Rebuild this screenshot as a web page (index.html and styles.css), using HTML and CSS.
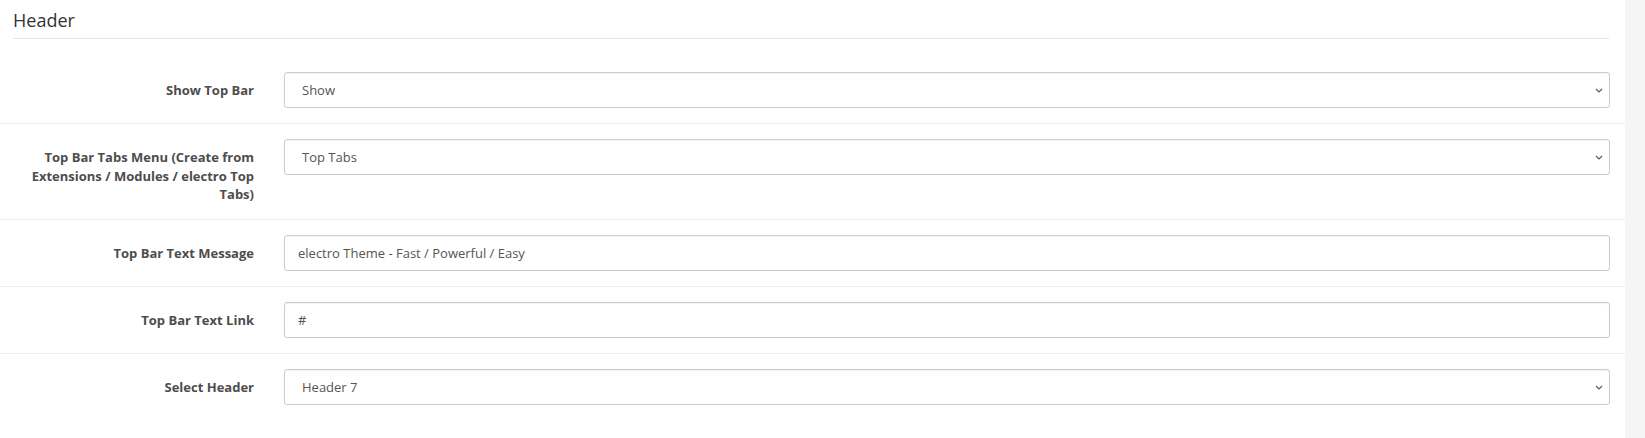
FILE: index.html
```html
<!DOCTYPE html>
<html lang="en">
<head>
  <meta charset="UTF-8">
  <title>Header settings</title>
  <link rel="stylesheet" href="styles.css">
</head>
<body>

<div class="page">
  <div class="panel">
    <fieldset class="settings">
      <legend class="legend">Header</legend>

      <div class="form-group">
        <label class="control-label" for="topbar">Show Top Bar</label>
        <div class="field">
          <select id="topbar" class="form-control">
            <option>Show</option>
            <option>Hide</option>
          </select>
          <svg class="caret" width="8" height="5" viewBox="0 0 8 5"><path d="M1 1 L4 4 L7 1" fill="none" stroke="#555" stroke-width="1.1"/></svg>
        </div>
      </div>

      <div class="form-group">
        <label class="control-label" for="toptabs">Top Bar Tabs Menu (Create from Extensions / Modules / electro Top Tabs)</label>
        <div class="field">
          <select id="toptabs" class="form-control">
            <option>Top Tabs</option>
          </select>
          <svg class="caret" width="8" height="5" viewBox="0 0 8 5"><path d="M1 1 L4 4 L7 1" fill="none" stroke="#555" stroke-width="1.1"/></svg>
        </div>
      </div>

      <div class="form-group">
        <label class="control-label" for="topmsg">Top Bar Text Message</label>
        <div class="field">
          <input type="text" id="topmsg" class="form-control" value="electro Theme - Fast / Powerful / Easy">
        </div>
      </div>

      <div class="form-group">
        <label class="control-label" for="toplink">Top Bar Text Link</label>
        <div class="field">
          <input type="text" id="toplink" class="form-control" value="#">
        </div>
      </div>

      <div class="form-group">
        <label class="control-label" for="header">Select Header</label>
        <div class="field">
          <select id="header" class="form-control">
            <option>Header 7</option>
          </select>
          <svg class="caret" width="8" height="5" viewBox="0 0 8 5"><path d="M1 1 L4 4 L7 1" fill="none" stroke="#555" stroke-width="1.1"/></svg>
        </div>
      </div>
    </fieldset>
  </div>
  <div class="side"></div>
</div>

</body>
</html>
```

FILE: styles.css
```css
html, body {
  margin: 0;
  height: 100%;
}
body {
  font-family: "Open Sans", Arial, sans-serif;
  font-size: 13px;
  color: #555;
  background: #fff;
}
.page {
  display: flex;
  min-height: 100%;
}
.panel {
  width: 1625px;
  background: #fff;
}
.side {
  flex: 1;
  background: #f5f5f5;
}
.settings {
  border: 0;
  margin: 0;
  padding: 0;
  min-width: 0;
}
.legend {
  display: block;
  box-sizing: border-box;
  width: 1596px;
  margin: 0 0 18px 13px;
  padding: 8px 0 6px;
  font-size: 18px;
  line-height: 24px;
  font-weight: 400;
  color: #333;
  border-bottom: 1px solid #e5e5e5;
}
.form-group {
  display: flex;
  align-items: flex-start;
  padding: 15px 15px 15px 0;
  border-top: 1px solid #ededed;
}
.form-group:first-of-type {
  border-top: 0;
}
.control-label {
  box-sizing: border-box;
  width: 254px;
  flex: none;
  padding-top: 9px;
  margin-right: 30px;
  text-align: right;
  font-weight: 700;
  line-height: 1.42857;
  color: #4d4d4d;
}
.field {
  flex: 1;
  position: relative;
}
.form-control {
  display: block;
  box-sizing: border-box;
  width: 100%;
  height: 36px;
  padding: 0 13px;
  font-family: inherit;
  font-size: 13px;
  color: #555;
  background: #fff;
  border: 1px solid #ccc;
  border-radius: 3px;
  box-shadow: inset 0 1px 1px rgba(0, 0, 0, 0.05);
  outline: none;
}
select.form-control {
  appearance: none;
  -webkit-appearance: none;
  padding-left: 17px;
}
.caret {
  position: absolute;
  right: 7px;
  top: 16px;
  pointer-events: none;
}
```
